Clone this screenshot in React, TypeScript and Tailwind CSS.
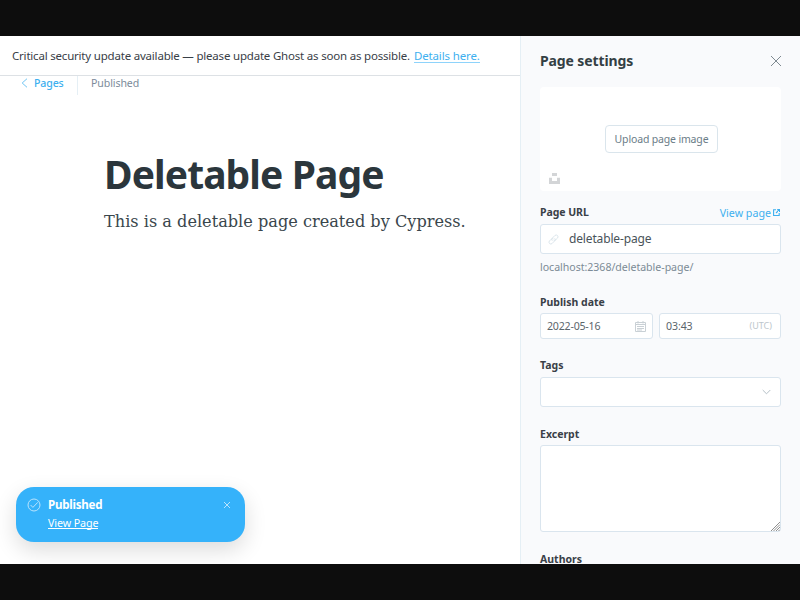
import type { ReactNode } from 'react';

function Label({ children, className }: { children: ReactNode; className: string }) {
  return <span className={`block whitespace-nowrap text-[10.5px] leading-4 font-bold text-[#394047] ${className}`}>{children}</span>;
}

function Notification() {
  return (
    <div className="absolute left-4 top-[451px] flex h-[55px] w-[229px] rounded-[18px] bg-[#35b2fa] text-white shadow-[0_8px_22px_rgba(0,0,0,0.14)]">
      <svg className="ml-[11px] mt-[11px] size-[14px] shrink-0" viewBox="0 0 14 14" fill="none" stroke="#b9e3fd" strokeWidth="1">
        <circle cx="7" cy="7" r="6" />
        <path d="M3.6 7l2.3 2.400L10.800 4.300" />
      </svg>
      <div className="ml-[7px] mt-[9px] flex flex-1 flex-col items-start">
        <div className="h-[18px] whitespace-nowrap text-[11.6px] leading-[18px] font-bold tracking-[-0.25px]">Published</div>
        <a className="h-[15px] whitespace-nowrap border-b border-white text-[10.7px] leading-[18px] tracking-[-0.1px]">View Page</a>
      </div>
      <svg className="mr-[14px] mt-[14px] size-[8px] shrink-0" viewBox="0 0 8 8" stroke="#b9e3fd" strokeWidth="1">
        <path d="M1 1l6 6M7 1l-6 6" />
      </svg>
    </div>
  );
}

function Editor() {
  return (
    <main className="flex w-[520px] shrink-0 flex-col bg-white">
      <div className="flex h-10 shrink-0 items-center border-b border-[#dde1e5] pl-3 text-[11.5px] text-[#394047]">
        <span className="whitespace-nowrap tracking-[-0.2px]">Critical security update available — please update Ghost as soon as possible.</span>
        <a className="ml-[4px] h-[14px] whitespace-nowrap border-b border-[#8ed3fb] leading-[13px] tracking-[-0.13px] text-[#3eb0ef]">Details here.</a>
      </div>
      <header className="flex h-5 shrink-0 text-[10.6px] leading-[14px]">
        <svg className="ml-[21px] mt-[2px] h-[10px] w-[7px]" viewBox="0 0 7 10" fill="none" stroke="#70c5f3" strokeWidth="1">
          <path d="M6 .7L1.2 5 6 9.3" />
        </svg>
        <span className="ml-[6px] w-[43px] font-medium tracking-[-0.15px] text-[#3eb0ef]">Pages</span>
        <span className="h-[19px] w-px bg-[#e5eff5]" />
        <span className="ml-[13px] tracking-[-0.1px] text-[#7c8b9a]">Published</span>
      </header>
      <article className="pl-[104px] pt-[51px]">
        <h1 className="h-[54px] whitespace-nowrap text-[39px] leading-[53px] font-bold tracking-[-0.9px] text-[#2b363c]">Deletable Page</h1>
        <p className="mt-[8px] whitespace-nowrap font-['DejaVu_Serif',serif] text-[16.15px] leading-[25px] text-[#3a464c]">This is a deletable page created by Cypress.</p>
      </article>
    </main>
  );
}

function Settings() {
  return (
    <aside className="flex flex-1 flex-col overflow-hidden border-l border-[#e5eff5] bg-[#f9fafc] pl-[19px] pr-[19px]">
      <div className="flex h-[51px] shrink-0 items-center justify-between pb-px">
        <h2 className="whitespace-nowrap text-[14px] leading-5 font-bold tracking-[-0.12px] text-[#343f44]">Page settings</h2>
        <svg className="-mr-[1px] size-3" viewBox="0 0 12 12" stroke="#7f8a91" strokeWidth="1">
          <path d="M1 1l10 10M11 1L1 11" />
        </svg>
      </div>
      <div className="flex h-[104px] shrink-0 flex-col rounded-[4px] bg-white">
        <button className="ml-[65px] mt-[38px] h-[28px] w-[113px] shrink-0 whitespace-nowrap rounded-[4px] border border-[#dae5ec] pt-px text-[10.5px] tracking-[-0.16px] text-[#6a7c87]">Upload page image</button>
        <svg className="ml-[9px] mt-[20px] h-[11px] w-[11px]" viewBox="0 0 11 11" fill="#d3d5d7">
          <path d="M3 0h5v3H3zM0 4.700h3V8h5V4.700h3V11H0z" />
        </svg>
      </div>
      <div className="mt-[13px] flex h-5 shrink-0 justify-between">
        <Label className="tracking-[-0.05px]">Page URL</Label>
        <a className="flex whitespace-nowrap text-[10.7px] leading-[18px] text-[#3eb0ef]">
          View page
          <svg className="ml-[2px] mt-[5px] mr-px size-[7px]" viewBox="0 0 7 7" fill="none" stroke="#3eb0ef" strokeWidth="1.1">
            <path d="M3 .8H.6v5.7h5.6V4M4.2.6h2.3v2.3M6.5.6L3 4" />
          </svg>
        </a>
      </div>
      <div className="flex h-[30px] shrink-0 items-center rounded-[3px] border border-[#dae5ee] bg-white text-[12px] text-[#495359]">
        <svg className="ml-[7px] mr-[10px] size-[11px]" viewBox="0 0 12 12" fill="none" stroke="#d8e2e9" strokeWidth="1">
          <path d="M4.700 7.300a2 2 0 0 1 0-2.800L7.700 1.500a2 2 0 0 1 2.800 2.800L8.500 6.300a2 2 0 0 1-2.300.4M7.300 4.700a2 2 0 0 1 0 2.800L4.300 10.500a2 2 0 0 1-2.800-2.800L3.500 5.700a2 2 0 0 1 2.300-.4" />
        </svg>
        <span className="tracking-[-0.15px]">deletable-page</span>
      </div>
      <p className="mt-[4px] h-[18px] shrink-0 whitespace-nowrap text-[10.6px] leading-[18px] tracking-[-0.03px] text-[#7c8b96]">localhost:2368/deletable-page/</p>
      <Label className="mt-[18px] shrink-0">Publish date</Label>
      <div className="mt-[3px] flex h-[26px] shrink-0 gap-[6px] text-[10.6px] text-[#5b656b]">
        <div className="flex w-[113px] items-center justify-between rounded-[3px] border border-[#dae5ee] bg-white px-[6px]">
          <span className="pt-px tracking-[-0.2px]">2022-05-16</span>
          <svg className="size-[11px]" viewBox="0 0 11 11" fill="none" stroke="#c9d0d5" strokeWidth="1">
            <path d="M.5 1.500h10v9H.5zM.5 3.500h10M3 0v2.500M8 0v2.500M2 5.500h7M2 7.500h7M2 9h5" />
          </svg>
        </div>
        <div className="flex flex-1 items-center justify-between rounded-[3px] border border-[#dae5ee] bg-white pl-[6px] pr-[8px]">
          <span className="pt-px tracking-[-0.1px]">03:43</span>
          <span className="text-[9px] text-[#bdc6cc]">(UTC)</span>
        </div>
      </div>
      <Label className="mt-[18px] shrink-0">Tags</Label>
      <div className="mt-[4px] flex h-[30px] shrink-0 items-center justify-end rounded-[3px] border border-[#dae5ee] bg-white pr-[9px]">
        <svg className="h-[6px] w-[9px]" viewBox="0 0 9 6" fill="none" stroke="#b4bfc6" strokeWidth="1">
          <path d="M.7 1l3.800 3.800L8.300 1" />
        </svg>
      </div>
      <Label className="mt-[19px] shrink-0">Excerpt</Label>
      <div className="mt-[3px] flex h-[87px] shrink-0 items-end justify-end rounded-[3px] border border-[#dae5ee] bg-white">
        <svg className="size-[9px]" viewBox="0 0 9 9" stroke="#8f8f8f" strokeWidth="1">
          <path d="M0 9L9 0M2.500 9L9 2.500M5 9l4-4M7.500 9L9 7.500" />
        </svg>
      </div>
      <Label className="mt-[19px] shrink-0">Authors</Label>
    </aside>
  );
}

export default function App() {
  return (
    <div className="h-[600px] w-[800px] overflow-hidden bg-[#0d0d0d] py-9 font-['Noto_Sans',sans-serif]">
      <div className="relative flex h-[528px] overflow-hidden">
        <Editor />
        <Settings />
        <Notification />
      </div>
    </div>
  );
}
